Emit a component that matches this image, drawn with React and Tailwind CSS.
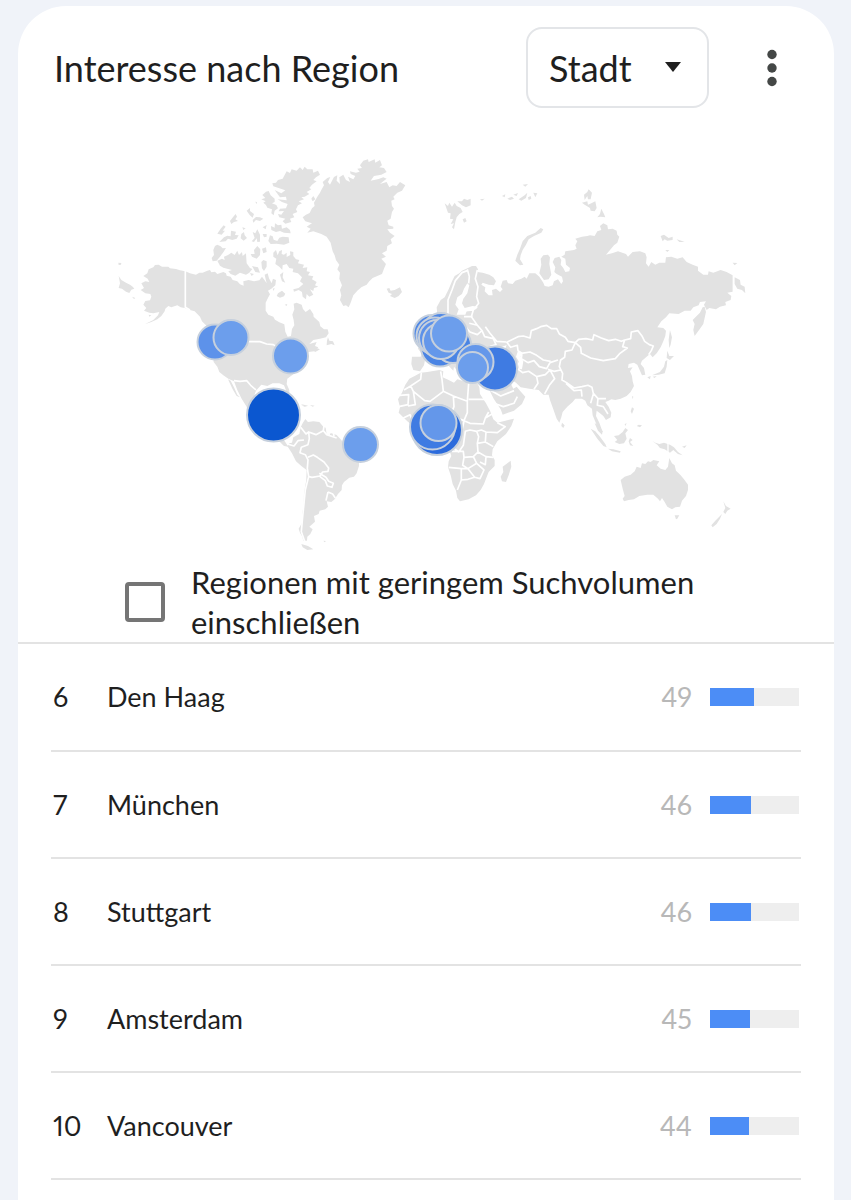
import { useState } from 'react';

const cities = [
  { rank: 6, name: 'Den Haag', value: 49 },
  { rank: 7, name: 'München', value: 46 },
  { rank: 8, name: 'Stuttgart', value: 46 },
  { rank: 9, name: 'Amsterdam', value: 45 },
  { rank: 10, name: 'Vancouver', value: 44 },
];

// Drawn in order, later markers lie on top
const markers = [
  { x: 215, y: 342, r: 17.5, color: '#5d92ea' },
  { x: 231, y: 337.5, r: 17.5, color: '#6c9eec' },
  { x: 290.5, y: 356, r: 17.5, color: '#6c9eec' },
  { x: 273.5, y: 415, r: 26.5, color: '#0b57d0' },
  { x: 360.5, y: 444.5, r: 17.5, color: '#6c9eec' },
  { x: 440, y: 347.5, r: 19, color: '#4a84e4' },
  { x: 453, y: 345, r: 18, color: '#4a84e4' },
  { x: 432, y: 333.5, r: 18.5, color: '#5088e5' },
  { x: 441, y: 331.5, r: 18.5, color: '#5088e5' },
  { x: 435, y: 336, r: 18.5, color: '#568ce7' },
  { x: 437, y: 338, r: 18, color: '#5c91e9' },
  { x: 441, y: 341, r: 18, color: '#6497ea' },
  { x: 449, y: 333.5, r: 18, color: '#6c9eec' },
  { x: 495, y: 368.5, r: 22, color: '#3f7be2' },
  { x: 475.5, y: 362, r: 18, color: '#6497ea' },
  { x: 472.5, y: 367.5, r: 15.5, color: '#6c9eec' },
  { x: 437, y: 430, r: 25, color: '#2c6bdc' },
  { x: 432.5, y: 427, r: 22.5, color: '#3f7be2' },
  { x: 438.5, y: 423, r: 18, color: '#6497ea' },
];

const northAmerica = [
  // mainland
  'M130 408L142 400L146 388L160 382L165 375L176 374L186 380L205 380L210 385L228 387L240 391L256 394L270 400L288 404L298 398L308 398L322 392L330 390L334 397L345 395L352 402L370 396L378 400L380 407L392 410L398 420L412 424L420 433L431 437L430 424L446 420L462 424L478 421L486 410L494 421L500 430L494 404L503 400L507 415L515 430L519 416L528 420L526 436L514 446L504 452L510 463L505 472L497 488L497 512L505 524L520 530L525 539L538 547L553 553L556 575L563 590L573 588L576 567L583 556L581 540L577 524L583 508L581 491L590 488L605 494L609 507L617 516L630 507L640 522L641 530L658 546L661 559L672 568L683 568L686 580L678 592L660 596L640 600L628 612L650 606L645 618L655 622L642 634L626 636L612 650L602 668L598 690L580 703L562 716L560 732L568 750L568 762L560 756L552 736L538 730L518 730L502 738L484 734L468 752L459 776L456 810L462 840L484 856L500 846L520 836L530 850L526 870L548 874L552 900L565 920L552 918L530 896L500 886L465 862L448 835L440 800L425 776L412 750L402 724L385 716L370 706L358 696L352 680L341 666L338 640L334 610L322 580L318 556L306 544L300 530L284 514L270 510L254 504L242 502L232 496L214 502L205 498L196 506L194 514L184 528L172 538L154 546L134 553L160 540L174 526L178 516L160 520L148 518L132 512L139 504L130 494L136 483L150 481L154 470L151 462L136 460L122 450L132 444L124 430L136 424L148 426L143 416Z',
  // Baja California
  'M384 718L392 722L402 742L412 764L420 772L410 768L398 748Z',
  // western Aleutians, Chukotka tip
  'M56 408L64 420L78 428L90 434L98 440L103 446L94 449L88 459L78 455L66 446L56 444L60 430ZM55 368L64 369L63 374L56 375ZM96 470L106 474L102 477ZM146 524L154 526L148 530Z',
  // Banks and Victoria
  'M345 318L352 314L362 319L368 325L378 324L370 337L360 350L350 362L338 364L335 354L342 345L340 330Z',
  'M384 345L394 338L404 345L412 332L417 345L426 336L428 348L438 340L440 370L450 384L457 387L448 398L438 404L420 398L406 407L392 402L385 394L396 390L370 383L360 377L352 362L366 356L374 360L372 350Z',
  // northern islands
  'M352 281L362 266L371 256L377 260L368 272L375 272L365 284ZM390 243L400 230L407 222L411 230L406 238L414 243L402 246L394 252ZM393 272L408 275L405 285L416 286L410 296L397 300L384 296L377 304L358 306L372 292L382 287L392 289Z',
  'M440 212L450 204L450 213L462 222L458 233L449 225ZM458 240L468 231L480 232L490 236L480 243L468 240L460 248ZM424 282L432 276L434 286L441 294L431 302L422 295ZM427 262L437 265L430 270ZM466 185L471 186L470 193Z',
  'M458 276L466 280L472 268L480 284L480 305L472 306L470 295L462 306L455 304L464 294ZM488 282L500 282L500 290L492 292ZM488 262L500 255L497 268ZM513 258L524 263L525 250L534 256L544 254L546 266L560 262L570 270L572 280L552 278L540 273L528 276L514 270Z',
  'M510 286L518 289L521 299L532 303L538 293L548 290L566 292L568 308L552 314L530 311L512 312L505 303Z',
  'M462 330L472 318L481 328L480 345L470 356L456 350L452 342L464 342ZM486 326L498 322L500 336L490 340ZM484 366L490 360L500 364L500 380L492 393L486 385ZM456 378L474 382L480 398L466 396ZM450 399L462 402L455 408Z',
  // Ellesmere
  'M517 130L528 128L534 120L548 116L560 94L570 99L575 88L590 92L600 82L608 90L614 80L622 88L638 88L640 98L654 92L660 104L648 112L640 120L650 124L636 134L628 144L634 148L620 156L628 162L614 170L604 172L612 178L596 184L606 190L594 196L588 208L592 216L578 222L583 232L570 236L574 246L556 251L548 244L556 236L538 232L534 222L544 224L552 213L536 214L540 206L558 205L563 192L546 186L533 178L560 181L558 170L540 172L524 150L544 160L556 151L520 139Z',
  'M487 165L498 155L506 153L512 166L524 176L524 186L516 190L529 195L534 205L524 212L521 226L514 220L516 208L502 203L498 195L490 188L497 184L484 178L496 174Z',
  // Baffin
  'M520 338L528 330L533 346L538 334L546 330L545 342L552 344L560 338L560 351L571 345L570 334L580 336L580 348L588 358L598 360L594 370L612 374L608 384L622 382L620 394L630 396L624 406L640 409L636 418L650 426L645 436L655 440L642 444L640 453L630 448L640 464L628 470L620 462L618 478L608 470L606 456L596 450L582 455L580 448L596 444L610 432L600 424L606 412L594 400L578 396L580 386L568 384L560 372L548 376L547 390L538 380L526 372L529 356L520 350Z',
  'M540 404L550 396L548 412L556 428L546 424ZM534 460L546 452L556 461L552 469L540 473L530 468ZM554 494L562 492L560 498ZM518 446L524 444L521 453Z',
  // Newfoundland, Nova Scotia
  'M684 592L688 602L699 604L704 616L694 612L680 616L681 602ZM636 630L650 624L660 628L646 636Z',
  // Greenland
  'M608 232L618 224L629 219L636 205L644 198L642 188L652 170L660 158L664 150L672 136L668 126L682 114L691 111L684 126L690 134L702 111L712 106L710 122L720 132L718 112L730 104L738 120L750 126L744 110L760 118L766 108L752 102L750 94L768 98L779 95L772 86L786 84L780 76L790 62L804 58L806 66L824 58L826 68L840 60L846 76L838 82L852 84L860 96L844 104L822 108L812 122L836 117L850 112L860 116L850 124L840 132L860 126L868 142L878 136L890 138L900 126L916 136L906 152L892 158L880 170L884 178L874 182L876 198L882 206L876 216L872 236L862 242L866 256L880 260L880 266L862 268L870 278L884 288L872 298L876 310L862 318L860 332L846 340L858 350L844 356L858 372L852 386L846 402L832 408L818 414L808 424L800 434L784 442L772 452L760 466L752 488L746 502L738 496L730 498L720 480L724 466L720 450L726 436L718 416L720 398L712 388L718 374L708 360L704 346L698 334L692 308L680 290L664 282L640 274L622 278L632 266L620 260L636 250L616 244Z',
  'M640 168L646 178L638 184L634 176Z',
  // Iceland
  'M860 446L868 444L872 452L884 450L900 442L906 456L896 468L884 474L870 468L876 462L866 458Z',
  // Cuba
  'M602 792L612 794L624 798L614 799Z',
];

const southAmerica = [
  'M376 237L384 246L400 244L418 246L430 260L437 263L440 283L455 280L470 285L484 300L500 325L537 350L537 378L530 400L522 410L508 413L492 426L486 436L485 450L474 462L464 478L454 486L440 484L444 500L436 508L419 512L416 522L402 528L405 545L388 560L398 568L391 582L382 590L381 602L370 602L367 590L360 578L356 566L368 545L366 520L371 500L372 460L379 420L380 390L364 378L348 364L336 340L322 318L328 310L336 308L340 292L358 282L362 262L368 250Z',
  'M364 612L384 618L400 628L382 630L368 622ZM430 602L438 603L434 607ZM364 196L384 197L374 200ZM390 195L404 197L398 200Z',
];

const southAmericaBorders =
  'M362 262L378 282L386 276L388 296L384 314L364 322L360 338L376 344L384 360L382 385L386 410L376 450L372 490L368 530L364 575L374 604M322 312L342 318L354 302L372 300M386 276L408 284L430 272L432 258M430 272L440 284L470 294M384 352L400 345L412 352L432 366L446 384L444 394L428 396L420 408L396 412L388 410M418 400L438 412L446 424L460 430L456 442L442 438L436 422L420 410M444 456L458 462L466 474M444 456L438 482M462 290L460 274M448 288L446 270';

const eurasia = [
  'M142 524L140 502L152 480L164 472L176 448L186 424L194 408L208 400L216 392L234 384L246 378L258 378L264 388L262 396L278 398L298 404L310 412L318 424L312 436L296 434L278 428L274 434L286 442L284 454L296 466L308 466L306 450L318 446L330 456L338 448L332 440L338 422L350 420L354 430L368 432L376 422L394 416L404 410L410 416L418 400L436 400L448 410L460 428L464 438L476 440L488 436L492 424L504 418L514 432L519 424L516 410L500 402L493 396L496 382L488 366L494 354L508 350L514 360L512 374L520 384L526 396L538 394L540 384L528 374L526 356L514 350L524 344L526 334L552 330L560 326L556 316L562 304L556 296L576 290L592 288L600 286L614 288L622 274L634 270L630 258L640 250L652 256L654 268L668 266L680 272L682 284L688 290L682 308L672 316L662 328L648 344L666 340L684 334L708 342L714 350L728 336L750 334L766 340L770 352L768 370L776 380L784 366L796 374L808 368L826 368L828 352L844 350L862 356L878 352L890 366L908 374L924 380L924 392L940 404L954 404L956 394L970 398L992 390L1010 396L1028 406L1028 455L1012 458L1024 468L1022 480L1006 486L1008 496L990 500L978 508L958 504L950 510L942 494L948 484L930 486L926 496L910 502L902 512L884 512L866 522L838 520L828 532L814 544L802 562L820 564L828 572L826 588L820 604L812 622L800 640L788 652L780 642L770 650L756 662L752 672L762 684L766 704L756 706L750 692L742 674L732 668L716 672L714 684L728 682L720 694L726 708L728 724L732 738L722 756L710 768L692 776L676 780L664 778L656 782L646 786L656 800L664 818L662 832L648 840L640 828L630 820L620 812L618 828L628 848L638 876L628 868L618 850L608 826L606 806L592 796L586 782L576 776L556 776L548 786L532 800L518 816L514 832L508 848L500 836L490 808L480 780L476 764L460 764L446 750L418 746L392 742L378 728L356 714L352 704L360 726L370 746L380 740L390 752L406 770L396 792L372 812L338 824L332 808L312 778L298 750L270 730L232 715L202 692L192 680L190 692L180 682L168 668L162 650L150 640L120 640L106 655L102 676L90 694L70 690L64 672L66 650L92 650L96 642L84 626L92 610L112 590L130 570L146 556L148 540Z',
  // Novaya Zemlya
  'M376 362L382 344L390 326L398 304L412 288L436 278L452 264L460 268L454 278L432 288L416 298L408 314L398 330L392 346L390 358L400 374L390 376Z',
  'M448 400L454 374L452 356L460 346L474 344L480 352L478 372L484 404L476 418L462 420Z',
  // Svalbard
  'M164 190L174 198L178 188L186 200L194 188L200 198L212 204L218 216L208 222L200 232L196 246L192 268L186 262L192 250L182 252L190 238L180 236L182 220L174 218ZM202 184L216 184L222 176L232 180L242 176L242 196L228 202L216 196ZM218 238L226 234L230 244L222 248Z',
  // Franz Josef Land
  'M336 168L346 163L344 172ZM352 176L366 170L372 176L360 180ZM370 164L384 159L380 168ZM386 178L404 166L412 158L408 174L394 182ZM414 172L422 168L424 176L416 180ZM430 158L442 160L436 172ZM398 134L414 132L406 140ZM270 178L284 176L276 182Z',
  // Severnaya Zemlya
  'M582 164L592 156L596 148L606 158L602 178L594 178L592 168L584 180ZM576 188L592 184L594 194L604 190L616 184L620 204L614 214L602 212L600 204L584 194ZM622 232L630 222L634 206L642 222L646 232L632 230Z',
  // New Siberian Islands, Wrangel
  'M812 288L822 284L836 294L848 290L848 300L832 302L824 298L818 304ZM860 298L874 302L884 306L868 306ZM826 330L838 330L832 336ZM1028 368L1042 369L1034 376Z',
  'M1034 412L1050 420L1052 434L1064 440L1066 460L1056 450L1042 446L1034 432Z',
  // Kamchatka
  'M944 500L948 516L944 534L940 552L930 566L914 588L910 570L914 552L908 540L920 528L930 518L938 502Z',
  // Sakhalin, Kurils, Japan
  'M840 570L846 592L842 614L838 624L836 600ZM832 632L838 648L852 648L840 660L830 654ZM832 660L830 680L824 700L806 704L786 706L810 696L822 680L826 664ZM772 712L782 708L780 718ZM788 710L800 708L794 714Z',
  // Ireland
  'M78 556L90 548L98 556L92 572L80 574Z',
  // Sri Lanka
  'M516 848L524 856L520 864L514 858Z',
];

const eurasiaBorders =
  'M352 606L384 590L400 588L420 594L424 572L440 566L452 560L470 556L484 566L500 566L508 582L526 592L534 604L556 608L566 598L588 596L608 600L612 584L634 594L656 602L676 598L694 604L704 600L722 596L724 576L744 572L756 588L764 604L778 614L790 618L784 632L776 644M556 608L572 622L574 640L602 654L640 662L676 656L690 640L712 624L698 620L704 600M556 608L546 630L526 634L524 652L512 660L508 680L518 700L516 720L530 728L552 744L576 740L594 736L606 742L610 760L624 776L648 776M350 606L362 622L382 616L384 632L396 640L394 656L414 668L432 662L448 680L470 686L480 668L504 660M394 640L420 636L440 646L460 660L482 664M474 688L492 694L512 690M386 668L380 684L398 698L416 694L440 710L444 730L432 748M440 710L466 704L480 690M480 690L494 716L478 736L464 762M356 712L340 690L326 680L310 690M326 680L350 660M286 560L300 580L320 604L350 606M262 390L256 416L264 440L260 470L266 490L250 510L244 530L262 556L276 572L262 584L240 576L226 560M250 510L226 512M248 530L222 530M232 388L238 410L236 430M174 526L174 480L186 450L196 422L216 398L232 392M262 556L238 550M276 572L284 590L310 596L318 614L300 620M528 730L552 752L574 750L576 770M610 762L602 790M624 776L622 796L640 800L654 822M300 750L332 768L372 752M312 790L340 800L372 790L382 770';

const baltic = 'M232 430L222 446L216 462L202 472L196 494L206 508L200 524L226 524L230 514L258 508L264 500L248 498L224 504L216 490L220 476L232 460L238 436Z';

const africa = [
  'M88 266L104 258L122 248L142 246L178 240L190 244L188 262L206 270L222 278L232 268L252 274L270 280L292 280L298 292L300 312L318 340L330 362L340 388L352 398L376 392L402 386L394 408L378 432L352 454L338 478L336 496L344 510L344 528L326 546L318 566L312 582L302 600L288 616L266 628L240 634L232 624L228 602L218 582L212 556L204 532L206 514L214 498L208 480L196 460L180 450L130 440L100 408L82 394L68 380L56 368L60 352L54 328L66 308L76 284Z',
  'M392 512L394 530L386 556L378 576L366 574L362 560L370 546L368 530Z',
];

const africaBorders =
  'M124 248L122 268L92 288L72 300M92 288L100 304L134 332L150 334L190 304L186 268L182 244M190 304L220 318L262 334L266 280M266 328L322 328M262 334L262 368L252 392L270 400L310 402L316 384L326 366M220 318L222 350L214 370L236 386L252 392M60 316L86 314L84 344L56 350M100 304L106 344L84 348M70 384L90 374L100 400M252 394L246 420L222 440L216 470L236 486L250 466L256 424L270 420L290 424L304 420L318 426L352 428L376 410L352 398M316 384L340 370L362 390M318 426L316 456L340 470M290 424L296 440L292 460L316 456M292 460L294 486L318 500L340 502M294 486L280 500L252 502L250 484L216 484M280 500L290 520L264 536L248 526L252 502M206 532L244 536L244 570L232 600M244 536L264 536L284 562L300 566L312 540L290 520M244 570L264 568L284 562M318 500L316 524L300 516';

const oceania = [
  // Australia
  'M182 540L194 530L212 524L224 514L230 500L242 504L246 490L256 492L264 484L272 486L280 480L298 484L290 496L302 506L316 510L324 500L328 474L336 490L344 496L348 512L362 526L372 538L384 554L384 570L378 588L366 602L360 620L346 622L336 628L322 620L314 606L306 594L300 604L294 596L280 584L262 584L238 588L222 598L206 600L192 604L188 596L194 588L188 566Z',
  'M344 646L358 646L352 656L348 658Z',
  // New Zealand
  'M490 604L498 618L512 626L502 632L496 642L490 636L496 624ZM486 642L480 656L470 672L458 682L454 676L466 662Z',
  // Sumatra, Java, Borneo
  'M92 386L106 394L120 410L136 432L140 442L130 438L112 416ZM144 446L160 448L182 454L180 458L156 454Z',
  'M162 408L176 406L188 396L196 384L204 390L196 400L200 416L192 430L178 432L164 426L172 420ZM210 414L218 420L210 426L220 438L210 436L206 424Z',
  // Philippines, Taiwan
  'M216 322L222 326L216 342L212 334ZM236 374L246 376L240 382L230 378ZM194 372L200 370L196 378ZM216 288L220 290L218 298Z',
  // New Guinea and neighbours
  'M276 422L286 428L298 432L312 428L330 434L342 442L354 456L368 466L354 462L340 450L330 458L314 448L300 444L292 434ZM366 440L380 436L374 444Z',
  'M104 370L114 374L128 394L126 404L114 392Z',
];

function Shapes({ paths }) {
  return paths.map((d) => <path key={d} d={d} />);
}

function WorldMap() {
  return (
    <svg
      viewBox="100 128 660 432"
      className="w-full"
      role="img"
      aria-label="Weltkarte"
      strokeLinejoin="round"
    >
      <g fill="#e2e2e2">
        <g transform="translate(100 140) scale(0.3333)">
          <Shapes paths={northAmerica} />
          <path
            d="M256 392V502L270 510M334 604L480 605L500 612L520 614L560 640M402 722L420 724L440 722L452 736L468 750"
            fill="none"
            stroke="#fff"
            strokeWidth="5"
          />
        </g>
        <g transform="translate(180 340) scale(0.3333)">
          <Shapes paths={southAmerica} />
          <path d={southAmericaBorders} fill="none" stroke="#fff" strokeWidth="5" />
        </g>
        <g transform="translate(390 140) scale(0.3333)">
          <Shapes paths={eurasia} />
          <path d={baltic} fill="#fff" />
          {/* Black Sea and Caspian */}
          <path
            d="M280 630L310 615L325 625L350 615L345 628L358 640L330 645L290 645ZM384 632L398 640L392 650L400 664L396 688L386 686L386 664L378 650Z"
            fill="#fff"
          />
          <path d={eurasiaBorders} fill="none" stroke="#fff" strokeWidth="5" />
        </g>
        <g transform="translate(380 290) scale(0.3333)">
          <Shapes paths={africa} />
          <path d={africaBorders} fill="none" stroke="#fff" strokeWidth="5" />
        </g>
        <g transform="translate(560 300) scale(0.3333)">
          <Shapes paths={oceania} />
          <path d="M324 428V460" stroke="#fff" strokeWidth="4" />
        </g>
      </g>
      <g stroke="#c6d0dd" strokeWidth="2">
        {markers.map((m, index) => (
          <circle key={index} cx={m.x} cy={m.y} r={m.r} fill={m.color} />
        ))}
      </g>
    </svg>
  );
}

export default function App() {
  const [includeLow, setIncludeLow] = useState(false);

  return (
    <div className="min-h-screen bg-[#f0f3f9] pt-[6px] pr-[17px] pl-[18px] font-['Lato',sans-serif] text-[#1f1f1f]">
      <main className="min-h-[1194px] rounded-t-[48px] bg-white">
        <header className="flex items-center pt-[21px] pr-[50px] pl-9">
          <h1 className="flex-1 text-[36px] leading-[44px]">Interesse nach Region</h1>
          <div className="relative">
            <select
              aria-label="Auflösung"
              className="h-[81px] w-[183px] appearance-none rounded-2xl border-2 border-[#e3e5e8] bg-white pl-[21px] text-[36px] leading-[44px]"
            >
              <option>Stadt</option>
            </select>
            <svg viewBox="0 0 16 10" className="pointer-events-none absolute top-[35px] right-7 h-[10px] w-4">
              <path d="M0 0H16L8 10Z" fill="#1f1f1f" />
            </svg>
          </div>
          <button aria-label="Mehr" className="ml-[51px] flex h-12 w-6 items-center justify-center">
            <svg viewBox="0 0 12 38" className="h-[38px] w-3" fill="#444746">
              <circle cx="6" cy="5.5" r="4.7" />
              <circle cx="6" cy="19" r="4.7" />
              <circle cx="6" cy="32.5" r="4.7" />
            </svg>
          </button>
        </header>

        <section className="pt-5 pr-[74px] pl-[82px]">
          <WorldMap />
        </section>

        <label className="flex items-center border-b-2 border-[#e3e3e3] pt-[2px] pr-[110px] pl-[107px]">
          <input
            type="checkbox"
            checked={includeLow}
            onChange={(e) => setIncludeLow(e.target.checked)}
            className="size-10 shrink-0 appearance-none rounded-[4px] border-4 border-[#757575] checked:bg-[#757575]"
          />
          <span className="ml-[26px] text-[31px] leading-10">
            Regionen mit geringem Suchvolumen einschließen
          </span>
        </label>

        <div className="px-[33px]">
          <table className="w-full border-collapse text-[27px] leading-8 proportional-nums">
            <tbody>
              {cities.map((city) => (
                <tr key={city.rank} className="h-[107px] border-b-2 border-[#e3e3e3]">
                  <td className="w-14 pl-[2px]">{city.rank}</td>
                  <td>{city.name}</td>
                  <td className="w-20 pr-[18px] text-right text-[#b8b8b8]">{city.value}</td>
                  <td className="w-[91px] pr-[2px]">
                    <div className="h-[18px] bg-[#eee]">
                      <div className="h-full bg-[#4c8df6]" style={{ width: `${city.value}%` }} />
                    </div>
                  </td>
                </tr>
              ))}
            </tbody>
          </table>
        </div>
      </main>
    </div>
  );
}
